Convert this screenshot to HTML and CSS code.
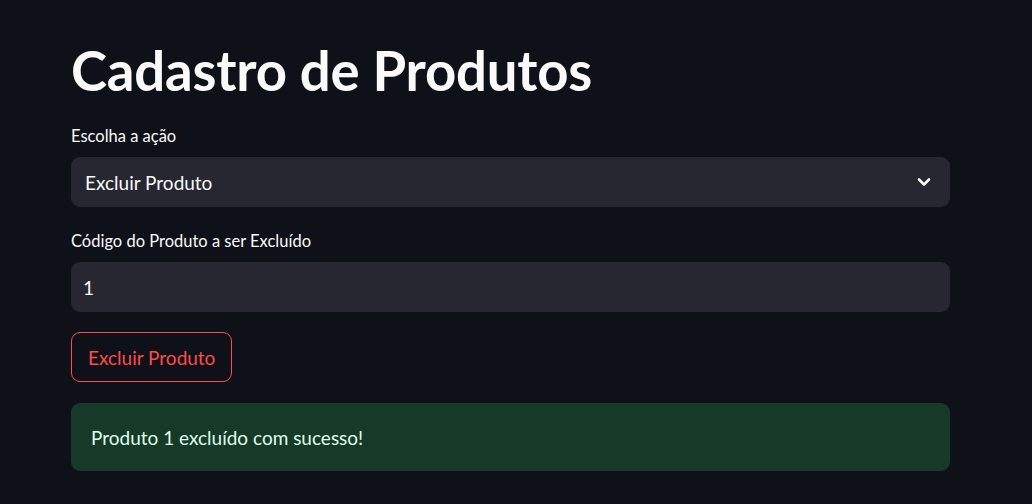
FILE: index.html
```html
<!DOCTYPE html>
<html lang="pt">
<head>
<meta charset="utf-8">
<link rel="stylesheet" href="styles.css">
<title>Cadastro de Produtos</title>
</head>
<body>
<main class="main">
  <h1 class="title">Cadastro de Produtos</h1>
  <div class="field">
    <label class="label">Escolha a ação</label>
    <div class="select">
      <span class="select-value">Excluir Produto</span>
      <svg class="chevron" width="14" height="10" viewBox="0 0 14 10"><path d="M2 2.5 L7 7.5 L12 2.5" fill="none" stroke="#fafafa" stroke-width="2.6" stroke-linecap="round" stroke-linejoin="round"/></svg>
    </div>
  </div>
  <div class="field">
    <label class="label">Código do Produto a ser Excluído</label>
    <div class="input"><span class="input-value">1</span></div>
  </div>
  <div class="actions">
    <button class="btn">Excluir Produto</button>
  </div>
  <div class="alert">Produto 1 excluído com sucesso!</div>
</main>
</body>
</html>
```
FILE: styles.css
```css
* { box-sizing: border-box; }
html, body {
  margin: 0;
  background: #0e1117;
  color: #fafafa;
  font-family: "Source Sans Pro", Lato, "Noto Sans", sans-serif;
}
.main {
  width: 879px;
  margin-left: 71px;
  padding-top: 36px;
  display: flex;
  flex-direction: column;
}
.title {
  margin: 0;
  font-size: 54.5px;
  font-weight: 700;
  line-height: 68px;
  letter-spacing: -0.2px;
}
.field {
  display: flex;
  flex-direction: column;
  margin-top: 22px;
}
.field + .field { margin-top: 24px; }
.label {
  font-size: 16.5px;
  line-height: 20px;
  margin-bottom: 11px;
}
.select, .input {
  height: 50px;
  background: #262730;
  border-radius: 9px;
  display: flex;
  align-items: center;
}
.select {
  justify-content: space-between;
  padding: 0 19px 0 14px;
}
.select-value { font-size: 19px; }
.input { padding: 0 12px; }
.input-value { font-size: 19px; }
.chevron { display: block; }
.actions { margin-top: 20px; }
.btn {
  height: 50px;
  padding: 0 16px;
  background: transparent;
  border: 1px solid #ff4b4b;
  border-radius: 9px;
  color: #ff4b4b;
  font-family: inherit;
  font-size: 19px;
}
.alert {
  margin-top: 21px;
  height: 68px;
  border-radius: 9px;
  background: #173928;
  color: #dffde9;
  font-size: 19px;
  display: flex;
  align-items: center;
  padding: 0 20px;
}
```
